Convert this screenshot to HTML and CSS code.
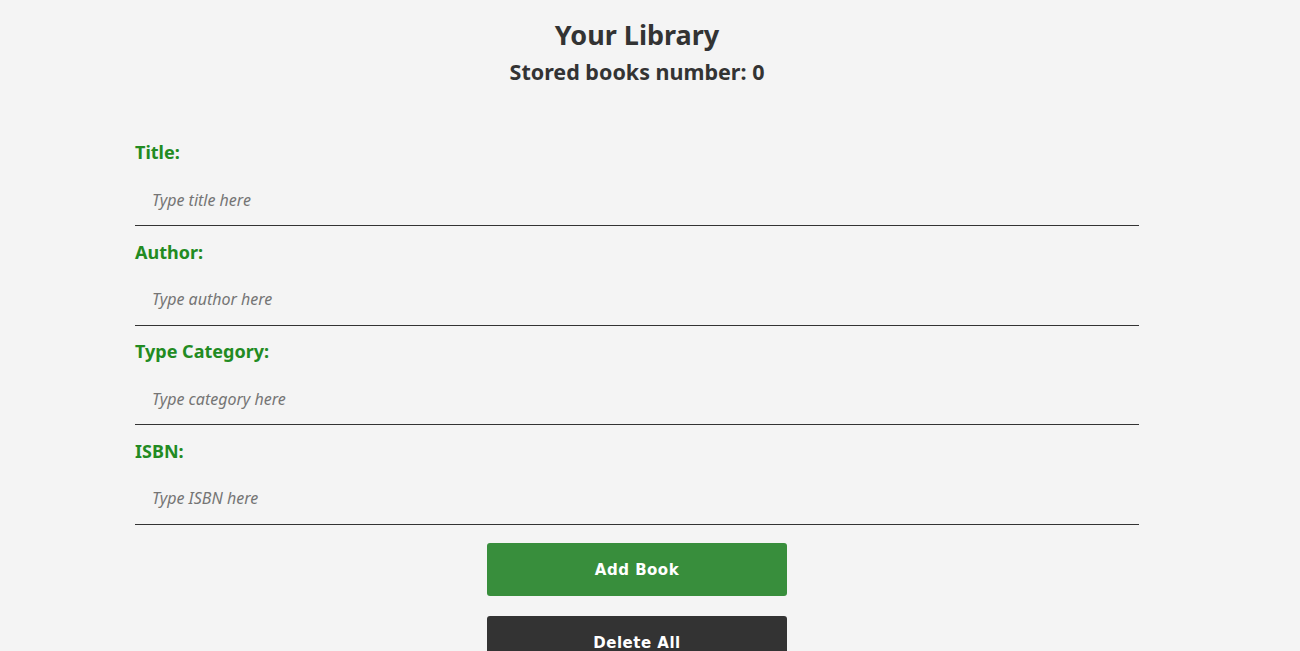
FILE: index.html
```html
<!DOCTYPE html>
<html lang="en">
<head>
<meta charset="utf-8">
<title>Your Library</title>
<link rel="stylesheet" href="styles.css">
</head>
<body>
<div class="page">
  <header class="head">
    <h1 class="title">Your Library</h1>
    <h2 class="count">Stored books number: <span>0</span></h2>
  </header>
  <form class="form">
    <div class="field">
      <label class="label" for="title">Title:</label>
      <input class="input" id="title" type="text" placeholder="Type title here">
    </div>
    <div class="field">
      <label class="label" for="author">Author:</label>
      <input class="input" id="author" type="text" placeholder="Type author here">
    </div>
    <div class="field">
      <label class="label" for="category">Type Category:</label>
      <input class="input" id="category" type="text" placeholder="Type category here">
    </div>
    <div class="field">
      <label class="label" for="isbn">ISBN:</label>
      <input class="input" id="isbn" type="text" placeholder="Type ISBN here">
    </div>
    <div class="actions">
      <button class="btn btn-add" type="button">Add Book</button>
      <button class="btn btn-del" type="button">Delete All</button>
    </div>
  </form>
</div>
</body>
</html>
```
FILE: styles.css
```css
html, body {
  margin: 0;
  padding: 0;
  background: #f4f4f4;
}
body {
  font-family: "Noto Sans", "Open Sans", sans-serif;
  color: #333;
}
.page {
  width: 1274px;
}
.head {
  text-align: center;
  padding-top: 15px;
}
.title {
  margin: 0;
  font-size: 27px;
  line-height: 40px;
  font-weight: 700;
  color: #333;
}
.count {
  margin: 3px 0 0;
  font-size: 21.5px;
  line-height: 28px;
  font-weight: 700;
  color: #333;
}
.form {
  width: 1004px;
  margin: 54px auto 0;
  display: flex;
  flex-direction: column;
}
.field {
  display: flex;
  flex-direction: column;
  margin-bottom: 13.5px;
}
.label {
  font-size: 18px;
  line-height: 24px;
  font-weight: 700;
  color: #228b22;
}
.input {
  margin-top: 10px;
  height: 52px;
  box-sizing: border-box;
  border: none;
  border-bottom: 1px solid #333;
  background: transparent;
  padding: 0 17px;
  font-family: "Noto Sans", "Open Sans", sans-serif;
  font-size: 16px;
  font-style: italic;
  color: #333;
  outline: none;
}
.input::placeholder {
  color: #757575;
  font-style: italic;
}
.actions {
  display: flex;
  flex-direction: column;
  align-items: center;
  gap: 20px;
  margin-top: 5px;
}
.btn {
  width: 300px;
  height: 53px;
  border: none;
  border-radius: 3px;
  font-family: "DejaVu Sans", Verdana, sans-serif;
  font-size: 15px;
  font-weight: 700;
  letter-spacing: 0.5px;
  color: #fff;
  cursor: pointer;
}
.btn-add {
  background: #388e3c;
}
.btn-del {
  background: #333;
}
```
